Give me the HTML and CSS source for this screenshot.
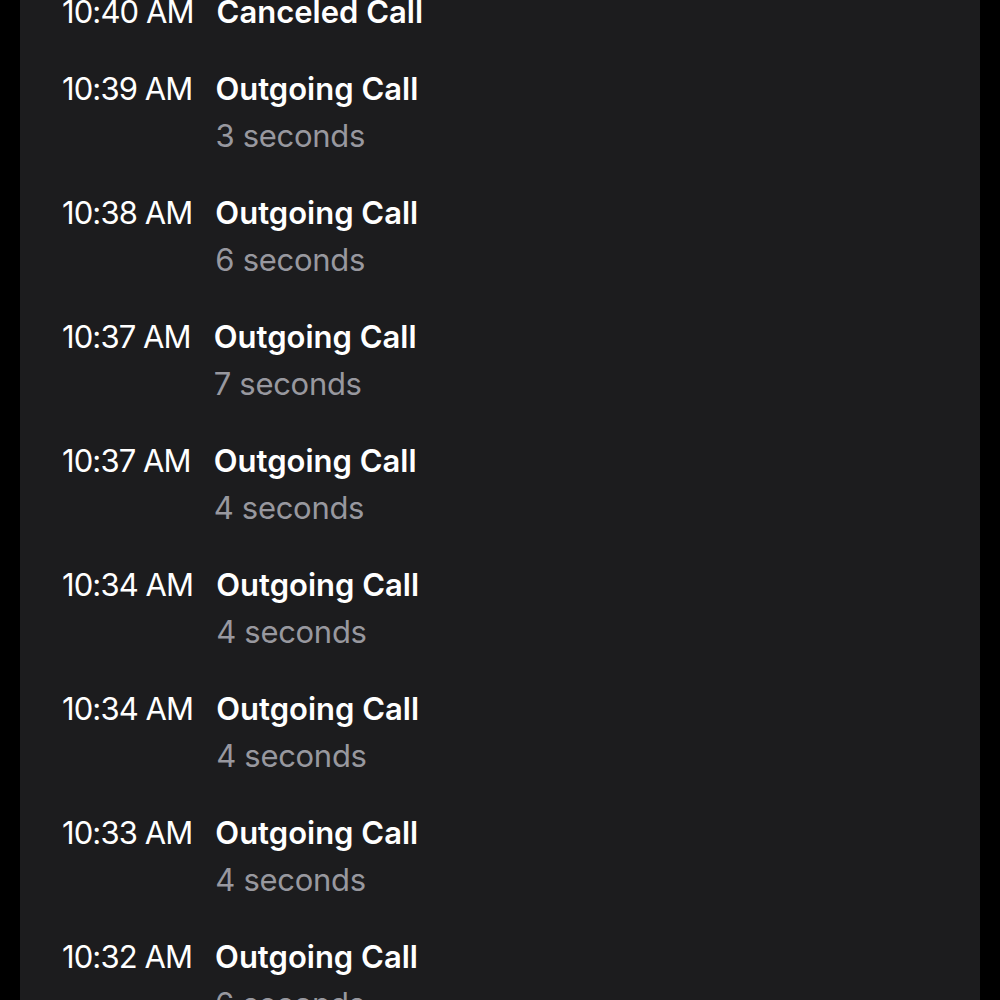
FILE: index.html
```html
<!DOCTYPE html>
<html>
<head>
<meta charset="utf-8">
<link rel="stylesheet" href="styles.css">
</head>
<body>
<div class="card">
  <div class="row"><div class="time">10:40 AM</div><div class="info"><div class="title">Canceled Call</div></div></div>
  <div class="row"><div class="time">10:39 AM</div><div class="info"><div class="title">Outgoing Call</div><div class="sub">3 seconds</div></div></div>
  <div class="row"><div class="time">10:38 AM</div><div class="info"><div class="title">Outgoing Call</div><div class="sub">6 seconds</div></div></div>
  <div class="row"><div class="time">10:37 AM</div><div class="info"><div class="title">Outgoing Call</div><div class="sub">7 seconds</div></div></div>
  <div class="row"><div class="time">10:37 AM</div><div class="info"><div class="title">Outgoing Call</div><div class="sub">4 seconds</div></div></div>
  <div class="row"><div class="time">10:34 AM</div><div class="info"><div class="title">Outgoing Call</div><div class="sub">4 seconds</div></div></div>
  <div class="row"><div class="time">10:34 AM</div><div class="info"><div class="title">Outgoing Call</div><div class="sub">4 seconds</div></div></div>
  <div class="row"><div class="time">10:33 AM</div><div class="info"><div class="title">Outgoing Call</div><div class="sub">4 seconds</div></div></div>
  <div class="row"><div class="time">10:32 AM</div><div class="info"><div class="title">Outgoing Call</div><div class="sub">6 seconds</div></div></div>
</div>
</body>
</html>
```
FILE: styles.css
```css
html, body {
  margin: 0;
  padding: 0;
  background: #000;
  height: 1000px;
  overflow: hidden;
}
body {
  padding: 0 20px;
  font-family: Inter, "Noto Sans", sans-serif;
  color: #fff;
}
.card {
  background: #1c1c1e;
  margin-top: -27px;
  padding: 0 42px;
  min-height: 1100px;
}
.row {
  display: flex;
  gap: 23px;
  padding: 15px 0;
}
.time {
  font-size: 31px;
  line-height: 47px;
  font-weight: 400;
  letter-spacing: -0.9px;
}
.title {
  font-size: 31px;
  line-height: 47px;
  font-weight: 600;
}
.sub {
  font-size: 31px;
  line-height: 47px;
  color: #98989f;
  letter-spacing: -0.3px;
}
```
